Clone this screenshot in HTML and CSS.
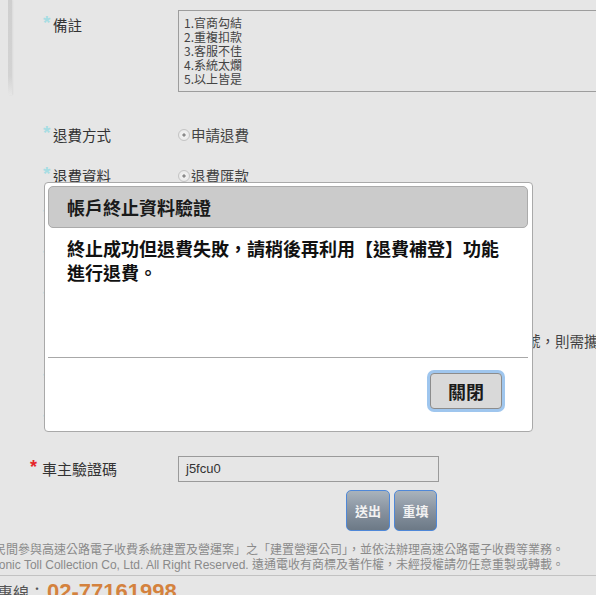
FILE: index.html
```html
<!DOCTYPE html>
<html lang="zh-Hant">
<head>
<meta charset="utf-8">
<title>帳戶終止資料驗證</title>
<link rel="stylesheet" href="styles.css">
</head>
<body>
<div class="page">
  <div class="top">
    <div class="edge"></div>
    <div class="form">
      <div class="row row-memo">
        <div class="label"><span class="star">*</span>備註</div>
        <div class="memo">1.官商勾結<br>2.重複扣款<br>3.客服不佳<br>4.系統太爛<br>5.以上皆是</div>
      </div>
      <div class="rows">
        <div class="row"><div class="label"><span class="star">*</span>退費方式</div><div class="value"><span class="radio"></span>申請退費</div></div>
        <div class="row"><div class="label"><span class="star">*</span>退費資料</div><div class="value"><span class="radio"></span>退費匯款</div></div>
        <div class="row"><div class="label"><span class="star">*</span>銀行代碼</div><div class="value">請選擇銀行</div></div>
        <div class="row"><div class="label"><span class="star">*</span>分行名稱</div><div class="value">請選擇分行</div></div>
        <div class="row"><div class="label"><span class="star">*</span>銀行帳號</div><div class="value">請輸入帳號</div></div>
        <div class="row"><div class="label label-plain"><span class="star star-none">*</span>戶名</div><div class="value note">如退費匯款帳戶之戶名須與車主相同，若車主為公司行號，則需攜帶相關證明文件</div></div>
        <div class="row"><div class="label"><span class="star">*</span>聯絡電話</div><div class="value">請輸入電話</div></div>
        <div class="row"><div class="label"><span class="star">*</span>信箱</div><div class="value">請輸入信箱</div></div>
      </div>
      <div class="row-verify">
        <div class="label label-req"><span class="star star-red">*</span>車主驗證碼</div>
        <div class="input">j5fcu0</div>
      </div>
      <div class="actions">
        <button class="btn" type="button">送出</button>
        <button class="btn" type="button">重填</button>
      </div>
    </div>
  </div>
  <div class="footer">
    <div class="foot-line">遠通電收為交通部「民間參與高速公路電子收費系統建置及營運案」之「建置營運公司」，並依法辦理高速公路電子收費等業務。</div>
    <div class="foot-line">Copyright © Far Eastern Electronic Toll Collection Co, Ltd. All Right Reserved. 遠通電收有商標及著作權，未經授權請勿任意重製或轉載。</div>
    <div class="foot-rule"></div>
    <div class="hotline"><span class="hot-label">專線：</span><span class="hot-num">02-77161998</span></div>
  </div>

  <div class="dialog">
    <div class="dlg-title">帳戶終止資料驗證</div>
    <div class="dlg-body">終止成功但退費失敗，請稍後再利用【退費補登】功能進行退費。</div>
    <div class="dlg-rule"></div>
    <div class="dlg-foot"><button class="dlg-btn" type="button">關閉</button></div>
  </div>
</div>
</body>
</html>
```
FILE: styles.css
```css
html, body {
  margin: 0;
  padding: 0;
  background: #e6e6e6;
}
body {
  font-family: "Noto Sans CJK TC", "Liberation Sans", sans-serif;
  color: #333;
}
.page {
  position: relative;
  width: 596px;
  height: 595px;
  overflow: hidden;
}
.top {
  display: flex;
  align-items: flex-start;
}
.edge {
  width: 4px;
  height: 95px;
  margin-left: 8px;
  flex: none;
  background: linear-gradient(to bottom, #cfcfcf 0%, #d3d3d3 80%, rgba(220,220,220,0) 100%);
  box-shadow: 1px 0 2px rgba(0,0,0,0.05);
}
.form {
  flex: 1;
  padding-top: 10px;
  min-width: 0;
}
.row {
  display: grid;
  grid-template-columns: 166px 1fr;
  align-items: start;
}
.row-memo {
  height: 115px;
}
.label {
  padding-left: 31px;
  font-size: 14.5px;
  line-height: 20px;
  color: #333;
  white-space: nowrap;
}
.row-memo .label {
  padding-top: 5px;
}
.star {
  display: inline-block;
  width: 10px;
  font-family: "Liberation Sans", sans-serif;
  font-weight: bold;
  font-size: 19px;
  line-height: 16px;
  vertical-align: top;
  color: #a6dde3;
}
.star-none {
  visibility: hidden;
}
.memo {
  box-sizing: border-box;
  width: 440px;
  height: 82px;
  border: 1px solid #9d9d9d;
  padding: 5px 5px;
  font-size: 12px;
  line-height: 14px;
  color: #444;
  white-space: nowrap;
}
.rows {
  display: grid;
  grid-auto-rows: 41px;
}
.value {
  font-size: 14.5px;
  line-height: 20px;
  color: #444;
  white-space: nowrap;
  display: flex;
  align-items: center;
}
.note {
  display: block;
  margin-top: 1px;
}
.radio {
  display: inline-block;
  box-sizing: border-box;
  width: 12px;
  height: 12px;
  border-radius: 50%;
  border: 1px solid #c4c4c4;
  background: radial-gradient(circle, #8a8a8a 0 1.4px, #f2f2f2 1.8px, #e4e4e4 100%);
  margin-right: 1px;
  flex: none;
}
.row-verify {
  display: grid;
  grid-template-columns: 166px 1fr;
  align-items: center;
  margin-top: 3px;
}
.label-req {
  padding-left: 18px;
  font-size: 15px;
}
.star-red {
  color: #e5252a;
  width: 12px;
  font-size: 18px;
}
.input {
  box-sizing: border-box;
  width: 261px;
  height: 26px;
  border: 1px solid #9a9a9a;
  padding-left: 7px;
  font-family: "Liberation Sans", sans-serif;
  font-size: 13px;
  line-height: 24px;
  color: #333;
}
.actions {
  display: flex;
  gap: 4px;
  padding-left: 334px;
  margin-top: 8px;
}
.btn {
  box-sizing: border-box;
  width: 44px;
  height: 41px;
  padding: 0;
  border: 1px solid #4f88d8;
  border-radius: 5px;
  background: linear-gradient(to bottom, #a9b3bc 0%, #8893a0 50%, #6c7986 100%);
  color: #f2f2f2;
  font-family: "Noto Sans CJK TC", sans-serif;
  font-weight: bold;
  font-size: 13px;
}
.btn + .btn {
  width: 43px;
}
.footer {
  margin-top: 12px;
}
.foot-line {
  display: flex;
  justify-content: flex-end;
  padding-right: 32px;
  white-space: nowrap;
  font-family: "Liberation Sans", "Noto Sans CJK TC", sans-serif;
  font-size: 12px;
  line-height: 15px;
  color: #8a8a8a;
}
.foot-rule {
  height: 1px;
  background: #c2c2c2;
  margin-top: 2px;
}
.hotline {
  display: flex;
  align-items: baseline;
  gap: 2px;
  margin-left: -3px;
  margin-top: 5px;
  white-space: nowrap;
}
.hot-label {
  font-size: 16px;
  line-height: 22px;
  color: #555;
}
.hot-num {
  font-family: "Liberation Sans", sans-serif;
  font-weight: bold;
  font-size: 22px;
  line-height: 22px;
  color: #d4823e;
}
.dialog {
  position: absolute;
  left: 44px;
  top: 182px;
  width: 489px;
  height: 250px;
  box-sizing: border-box;
  background: #fff;
  border: 1px solid #a9a9a9;
  border-radius: 4px;
  color: #111;
}
.dlg-title {
  box-sizing: border-box;
  height: 42px;
  margin: 3px 4px 0 3px;
  padding: 2px 0 0 18px;
  background: #cbcbcb;
  border: 1px solid #ababab;
  border-radius: 5px;
  font-weight: bold;
  font-size: 18px;
  line-height: 36px;
  color: #1a1a1a;
}
.dlg-body {
  box-sizing: border-box;
  height: 129px;
  padding: 8px 24px 0 22px;
  font-weight: bold;
  font-size: 18px;
  line-height: 24px;
  color: #111;
}
.dlg-rule {
  height: 1px;
  margin: 0 4px 0 3px;
  background: #a8a8a8;
}
.dlg-foot {
  display: flex;
  justify-content: flex-end;
  padding: 15px 30px 0 0;
}
.dlg-btn {
  box-sizing: border-box;
  width: 72px;
  height: 36px;
  padding: 0;
  border: 1px solid #8c8c8c;
  border-radius: 4px;
  background: #d9d9d9;
  box-shadow: 0 0 0 3px #9fc6ee;
  font-family: "Noto Sans CJK TC", sans-serif;
  font-weight: bold;
  font-size: 18px;
  color: #1a1a1a;
}
```
